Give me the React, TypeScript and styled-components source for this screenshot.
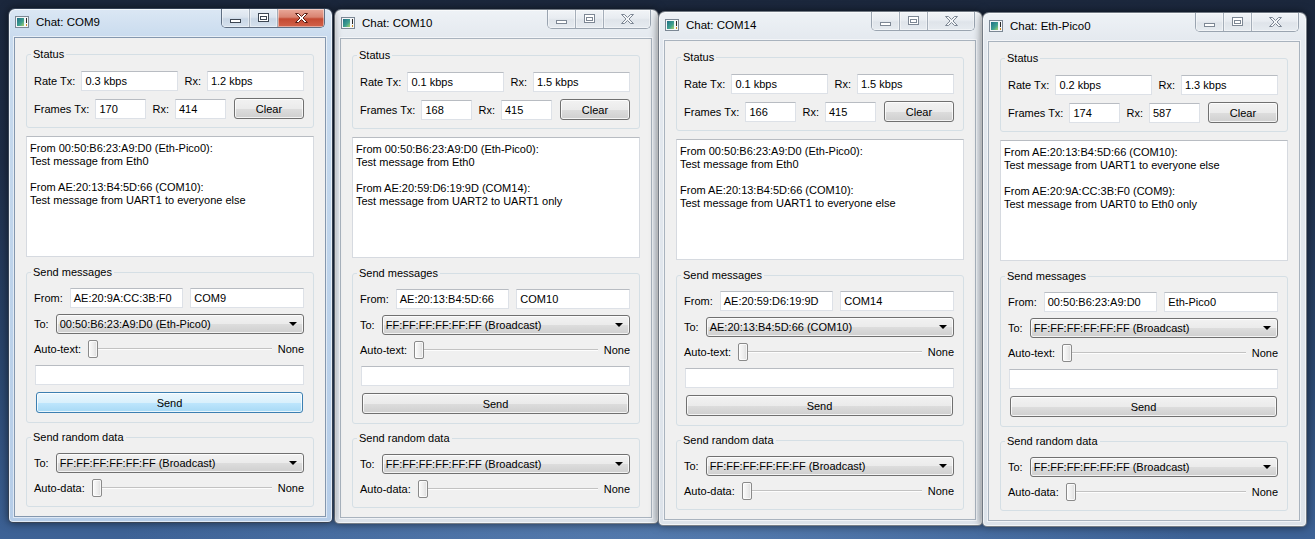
import React from 'react';
import styled, { createGlobalStyle, css } from 'styled-components';

interface Chat {
  title: string;
  left: number;
  top: number;
  active?: boolean;
  rateTx: string;
  rateRx: string;
  framesTx: string;
  framesRx: string;
  log: string[];
  fromMac: string;
  fromName: string;
  to: string;
}

const BROADCAST = 'FF:FF:FF:FF:FF:FF (Broadcast)';

const chats: Chat[] = [
  {
    title: 'COM9', left: 8, top: 8, active: true,
    rateTx: '0.3 kbps', rateRx: '1.2 kbps', framesTx: '170', framesRx: '414',
    log: ['From 00:50:B6:23:A9:D0 (Eth-Pico0):', 'Test message from Eth0', '', 'From AE:20:13:B4:5D:66 (COM10):', 'Test message from UART1 to everyone else'],
    fromMac: 'AE:20:9A:CC:3B:F0', fromName: 'COM9', to: '00:50:B6:23:A9:D0 (Eth-Pico0)',
  },
  {
    title: 'COM10', left: 334, top: 9,
    rateTx: '0.1 kbps', rateRx: '1.5 kbps', framesTx: '168', framesRx: '415',
    log: ['From 00:50:B6:23:A9:D0 (Eth-Pico0):', 'Test message from Eth0', '', 'From AE:20:59:D6:19:9D (COM14):', 'Test message from UART2 to UART1 only'],
    fromMac: 'AE:20:13:B4:5D:66', fromName: 'COM10', to: BROADCAST,
  },
  {
    title: 'COM14', left: 658, top: 11,
    rateTx: '0.1 kbps', rateRx: '1.5 kbps', framesTx: '166', framesRx: '415',
    log: ['From 00:50:B6:23:A9:D0 (Eth-Pico0):', 'Test message from Eth0', '', 'From AE:20:13:B4:5D:66 (COM10):', 'Test message from UART1 to everyone else'],
    fromMac: 'AE:20:59:D6:19:9D', fromName: 'COM14', to: 'AE:20:13:B4:5D:66 (COM10)',
  },
  {
    title: 'Eth-Pico0', left: 982, top: 12,
    rateTx: '0.2 kbps', rateRx: '1.3 kbps', framesTx: '174', framesRx: '587',
    log: ['From AE:20:13:B4:5D:66 (COM10):', 'Test message from UART1 to everyone else', '', 'From AE:20:9A:CC:3B:F0 (COM9):', 'Test message from UART0 to Eth0 only'],
    fromMac: '00:50:B6:23:A9:D0', fromName: 'Eth-Pico0', to: BROADCAST,
  },
];

const GlobalStyle = createGlobalStyle`
  html, body {
    margin: 0;
    padding: 0;
    overflow: hidden;
  }
  body {
    font-family: "Liberation Sans", Arial, sans-serif;
    font-size: 11px;
    color: #000;
  }
`;

const Desktop = styled.div`
  position: relative;
  width: 1315px;
  height: 539px;
  overflow: hidden;
  background:
    radial-gradient(ellipse at 50% 130%, rgba(120, 160, 210, 0.5), rgba(120, 160, 210, 0) 60%),
    linear-gradient(180deg, #1b273c 0%, #1e2d47 30%, #2b4870 70%, #3d6296 100%);
`;

// each chat is its own top-level window on the desktop
const Window = styled.div<{ $left: number; $top: number; $active?: boolean }>`
  position: absolute;
  left: ${p => p.$left}px;
  top: ${p => p.$top}px;
  z-index: ${p => (p.$active ? 2 : 1)};
  width: 325px;
  height: 515px;
  box-sizing: border-box;
  display: flex;
  flex-direction: column;
  padding: 0 6px 5px 5px;
  border-radius: 7px 7px 5px 5px;
  ${p =>
    p.$active
      ? css`
          border: 1px solid rgba(18, 28, 44, 0.8);
          background: linear-gradient(180deg, #dbe7f4 0px, #c9dbee 28px, #bcd2ea 60%, #b6cde8 100%);
        `
      : css`
          border: 1px solid rgba(40, 48, 60, 0.6);
          background: linear-gradient(180deg, #eef2f6 0px, #e4e9ef 28px, #dde3ea 100%);
        `}
  box-shadow: inset 0 0 0 1px rgba(255, 255, 255, 0.6), 0 0 9px rgba(0, 0, 0, 0.55);
`;

const TitleBar = styled.div`
  height: 28px;
  display: flex;
  align-items: center;
  gap: 7px;
  padding: 0 0 2px 1px;
  box-sizing: border-box;
`;

const TitleText = styled.span`
  font-size: 11.5px;
  color: #000;
  white-space: nowrap;
`;

const Caption = styled.div<{ $active?: boolean }>`
  margin-left: auto;
  margin-right: 1px;
  align-self: flex-start;
  display: flex;
  height: 18px;
  border: 1px solid ${p => (p.$active ? '#5f6e82' : '#9aa4b0')};
  border-top: none;
  border-radius: 0 0 5px 5px;
  overflow: hidden;
`;

const CapButton = styled.div<{ $w: number; $active?: boolean; $close?: boolean }>`
  width: ${p => p.$w}px;
  display: flex;
  align-items: center;
  justify-content: center;
  box-shadow: inset 0 0 0 1px rgba(255, 255, 255, 0.45);
  background: ${p =>
    p.$close && p.$active
      ? 'linear-gradient(180deg, #e9a99a 0%, #d98471 45%, #c44a32 55%, #d2624a 100%)'
      : p.$active
      ? 'linear-gradient(180deg, #e8eef5 0%, #dbe4ee 45%, #c9d6e5 55%, #d6e1ed 100%)'
      : 'linear-gradient(180deg, #f1f4f7 0%, #e8ecf1 45%, #dfe4ea 55%, #e6ebf0 100%)'};
  & + & {
    border-left: 1px solid ${p => (p.$active ? '#6d7b8d' : '#a5aeb9')};
  }
`;

const Client = styled.div<{ $active?: boolean }>`
  flex: 1;
  min-height: 0;
  background: #f0f0f0;
  border: 1px solid ${p => (p.$active ? '#8497ae' : '#a9b3be')};
  box-shadow: 0 0 0 1px rgba(255, 255, 255, 0.55);
  display: flex;
  flex-direction: column;
  gap: 8px;
  padding: 9px 11px;
`;

const Group = styled.fieldset<{ $pt: number; $pb: number; $mt?: number }>`
  margin: ${p => p.$mt ?? 0}px 0 0;
  min-width: 0;
  border: 1px solid #d5dfe5;
  border-radius: 3px;
  padding: ${p => p.$pt}px 9px ${p => p.$pb}px 7px;
`;

const Legend = styled.legend`
  padding: 0 2px;
  margin-left: -3px;
  line-height: 14px;
`;

const GroupBody = styled.div<{ $gap: number }>`
  display: flex;
  flex-direction: column;
  gap: ${p => p.$gap}px;
`;

const GridRow = styled.div<{ $cols: string; $gap?: number }>`
  display: grid;
  grid-template-columns: ${p => p.$cols};
  column-gap: ${p => p.$gap ?? 6}px;
  align-items: center;
`;

const Label = styled.span`
  white-space: nowrap;
`;

const TextBox = styled.div<{ $wide?: boolean }>`
  height: 20px;
  min-width: 0;
  box-sizing: border-box;
  margin: ${p => (p.$wide ? '1px 0 0 1px' : '0')};
  padding: 0 3px;
  display: flex;
  align-items: center;
  white-space: nowrap;
  overflow: hidden;
  background: #fff;
  border: 1px solid #dde1e7;
  border-top-color: #b8bcc2;
`;

const buttonFace = css`
  box-sizing: border-box;
  border: 1px solid #707070;
  border-radius: 3px;
  background: linear-gradient(180deg, #f2f2f2 0%, #ebebeb 50%, #dddddd 51%, #cfcfcf 100%);
  box-shadow: inset 0 0 0 1px rgba(255, 255, 255, 0.75);
`;

const PushButton = styled.div<{ $hot?: boolean; $wide?: boolean }>`
  ${buttonFace};
  height: 21px;
  margin: ${p => (p.$wide ? '1px 1px 0 2px' : '0 0 0 2px')};
  display: flex;
  align-items: center;
  justify-content: center;
  ${p =>
    p.$hot &&
    css`
      border-color: #3c7fb1;
      background: linear-gradient(180deg, #eaf6fd 0%, #d9f0fc 50%, #bee6fd 51%, #a7d9f5 100%);
    `}
`;

const Combo = styled.div`
  ${buttonFace};
  height: 20px;
  min-width: 0;
  padding: 0 6px 0 3px;
  display: flex;
  align-items: center;
  justify-content: space-between;
  white-space: nowrap;
  &::after {
    content: '';
    border-left: 4px solid transparent;
    border-right: 4px solid transparent;
    border-top: 4px solid #000;
  }
`;

const SliderRow = styled.div`
  height: 18px;
  display: flex;
  align-items: center;
  gap: 6px;
`;

const Track = styled.div`
  flex: 1;
  margin-left: 1px;
  display: flex;
  align-items: center;
`;

const Handle = styled.div`
  width: 10px;
  height: 18px;
  box-sizing: border-box;
  border: 1px solid #8a8a8a;
  border-radius: 2px;
  background: linear-gradient(90deg, #fbfbfb 0%, #ececec 60%, #dcdcdc 100%);
  box-shadow: inset 0 0 0 1px rgba(255, 255, 255, 0.7);
`;

const Line = styled.div`
  flex: 1;
  height: 1px;
  background: #c2c2c2;
  border-bottom: 1px solid #fdfdfd;
`;

const Log = styled.div`
  flex: 1;
  min-height: 0;
  overflow: hidden;
  padding: 5px 3px;
  white-space: pre-wrap;
  line-height: 13.1px;
  background: #fff;
  border: 1px solid #d6dae0;
  border-top-color: #b8bcc2;
`;

function AppIcon() {
  return (
    <svg width="14" height="12" viewBox="0 0 14 12">
      <defs>
        <linearGradient id="appg" x1="0" y1="0" x2="1" y2="1">
          <stop offset="0" stopColor="#1f6f86" />
          <stop offset="0.6" stopColor="#3fa08f" />
          <stop offset="1" stopColor="#a9d36b" />
        </linearGradient>
      </defs>
      <rect x="0.5" y="0.5" width="13" height="11" fill="#f4f6f8" stroke="#7b8794" />
      <rect x="2" y="2" width="7" height="8" fill="url(#appg)" />
      <rect x="11" y="2" width="1" height="5" fill="#2a2a2a" />
      <rect x="11" y="8" width="1" height="2" fill="#d08a20" />
    </svg>
  );
}

function MinGlyph({ active }: { active?: boolean }) {
  return (
    <svg width="11" height="18" viewBox="0 0 11 18">
      <rect x="0.5" y="10.5" width="10" height="3" fill="#fff" stroke={active ? '#3d4652' : '#7d8794'} />
    </svg>
  );
}

function MaxGlyph({ active }: { active?: boolean }) {
  const c = active ? '#3d4652' : '#7d8794';
  return (
    <svg width="11" height="18" viewBox="0 0 11 18">
      <rect x="0.5" y="4.5" width="10" height="8" fill="#fff" stroke={c} />
      <rect x="2.5" y="7.5" width="6" height="3" fill="none" stroke={c} />
    </svg>
  );
}

function CloseGlyph({ active }: { active?: boolean }) {
  return (
    <svg width="13" height="18" viewBox="0 0 13 18">
      <path
        d="M0.5 4.5 H3.5 L6.5 7.5 L9.5 4.5 H12.5 L8 9 L12.5 13.5 H9.5 L6.5 10.5 L3.5 13.5 H0.5 L5 9 Z"
        fill={active ? '#fff' : '#f4f6f8'}
        stroke={active ? '#5a1e14' : '#7d8794'}
      />
    </svg>
  );
}

function Slider({ label }: { label: string }) {
  return (
    <SliderRow>
      <Label>{label}</Label>
      <Track>
        <Handle />
        <Line />
      </Track>
      <Label>None</Label>
    </SliderRow>
  );
}

function ChatWindow({ chat }: { chat: Chat }) {
  const a = chat.active;
  return (
    <Window $left={chat.left} $top={chat.top} $active={a}>
      <TitleBar>
        <AppIcon />
        <TitleText>Chat: {chat.title}</TitleText>
        <Caption $active={a}>
          <CapButton $w={27} $active={a}><MinGlyph active={a} /></CapButton>
          <CapButton $w={27} $active={a}><MaxGlyph active={a} /></CapButton>
          <CapButton $w={46} $active={a} $close><CloseGlyph active={a} /></CapButton>
        </Caption>
      </TitleBar>
      <Client $active={a}>
        <Group $pt={10} $pb={8}>
          <Legend>Status</Legend>
          <GroupBody $gap={7}>
            <GridRow $cols="auto 1fr auto 1fr">
              <Label>Rate Tx:</Label>
              <TextBox>{chat.rateTx}</TextBox>
              <Label>Rx:</Label>
              <TextBox>{chat.rateRx}</TextBox>
            </GridRow>
            <GridRow $cols="auto 1fr auto 1fr 72px">
              <Label>Frames Tx:</Label>
              <TextBox>{chat.framesTx}</TextBox>
              <Label>Rx:</Label>
              <TextBox>{chat.framesRx}</TextBox>
              <PushButton>Clear</PushButton>
            </GridRow>
          </GroupBody>
        </Group>
        <Log>{chat.log.join('\n')}</Log>
        <Group $pt={9} $pb={9}>
          <Legend>Send messages</Legend>
          <GroupBody $gap={6}>
            <GridRow $cols="auto 1fr 1fr" $gap={7}>
              <Label>From:</Label>
              <TextBox>{chat.fromMac}</TextBox>
              <TextBox>{chat.fromName}</TextBox>
            </GridRow>
            <GridRow $cols="auto 1fr" $gap={7}>
              <Label>To:</Label>
              <Combo>{chat.to}</Combo>
            </GridRow>
            <Slider label="Auto-text:" />
            <TextBox $wide />
            <PushButton $hot={a} $wide>Send</PushButton>
          </GroupBody>
        </Group>
        <Group $pt={9} $pb={9} $mt={-1}>
          <Legend>Send random data</Legend>
          <GroupBody $gap={6}>
            <GridRow $cols="auto 1fr" $gap={7}>
              <Label>To:</Label>
              <Combo>{BROADCAST}</Combo>
            </GridRow>
            <Slider label="Auto-data:" />
          </GroupBody>
        </Group>
      </Client>
    </Window>
  );
}

export default function App() {
  return (
    <>
      <GlobalStyle />
      <Desktop>
        {chats.map(c => (
          <ChatWindow key={c.title} chat={c} />
        ))}
      </Desktop>
    </>
  );
}
